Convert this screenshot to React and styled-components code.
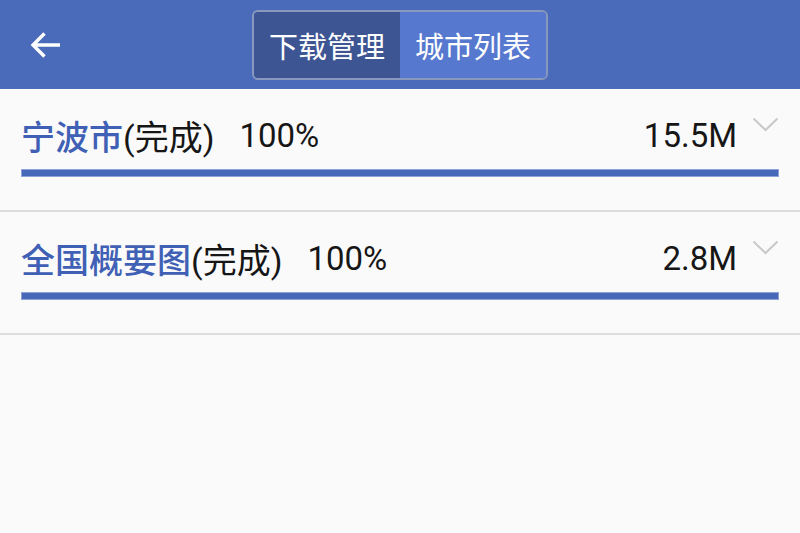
import styled, { createGlobalStyle } from 'styled-components';

const GlobalStyle = createGlobalStyle`
  body {
    margin: 0;
    background-color: #fafafa;
    font-family: Roboto, "Noto Sans CJK SC", sans-serif;
  }
`;

const Page = styled.div`
  min-height: 533px;
  background-color: #fafafa;
`;

const Header = styled.header`
  display: grid;
  grid-template-columns: 1fr auto 1fr;
  align-items: center;
  height: 89px;
  background-color: #4a6bba;
`;

const BackButton = styled.button`
  justify-self: start;
  display: flex;
  align-items: center;
  justify-content: center;
  width: 90px;
  height: 89px;
  padding: 0;
  border: none;
  background: transparent;
`;

const Tabs = styled.div`
  display: flex;
  height: 66px;
  border: 2px solid #8b98bd;
  border-radius: 6px;
  overflow: hidden;
`;

const Tab = styled.div`
  display: flex;
  align-items: center;
  padding: 0 15px;
  font-size: 29px;
  color: #fff;
  background-color: ${(p) => (p.active ? '#3e5593' : '#5678cf')};
`;

const List = styled.section`
  display: flex;
  flex-direction: column;
`;

const Item = styled.div`
  padding: 26px 21px 33px;
  border-bottom: 2px solid #dddddd;
`;

const ItemTop = styled.div`
  display: flex;
  align-items: center;
  height: 40px;
  margin-bottom: 14px;
  font-size: 33px;
  color: #161616;
`;

const Name = styled.span`
  color: #3f60b5;
  font-size: 34px;
  font-weight: 500;
`;

const Status = styled.span`
  font-size: 34px;
`;

const Percent = styled.span`
  margin-left: 25px;
`;

const Size = styled.span`
  margin-left: auto;
`;

const Chevron = styled.svg`
  align-self: flex-start;
  margin: 2px 0 0 15px;
`;

const Bar = styled.div`
  height: 6px;
  background-color: #4767b9;
  border: 1px solid #8ea2d8;
`;

const items = [
  { name: '宁波市', status: '(完成)', percent: '100%', size: '15.5M' },
  { name: '全国概要图', status: '(完成)', percent: '100%', size: '2.8M' },
];

export default function App() {
  return (
    <Page>
      <GlobalStyle />
      <Header>
        <BackButton aria-label='back'>
          <svg width='32' height='32' viewBox='0 0 32 32'>
            <path
              d='M31 16H4M15.5 4.5L4 16L15.5 27.5'
              fill='none'
              stroke='#fff'
              strokeWidth='3.4'
            />
          </svg>
        </BackButton>
        <Tabs>
          <Tab active>下载管理</Tab>
          <Tab>城市列表</Tab>
        </Tabs>
        <div />
      </Header>
      <List>
        {items.map((item) => (
          <Item key={item.name}>
            <ItemTop>
              <Name>{item.name}</Name>
              <Status>{item.status}</Status>
              <Percent>{item.percent}</Percent>
              <Size>{item.size}</Size>
              <Chevron width='27' height='15' viewBox='0 0 27 15'>
                <path d='M1.5 1.5L13.5 13L25.5 1.5' fill='none' stroke='#c8c8c8' strokeWidth='2' />
              </Chevron>
            </ItemTop>
            <Bar />
          </Item>
        ))}
      </List>
    </Page>
  );
}
